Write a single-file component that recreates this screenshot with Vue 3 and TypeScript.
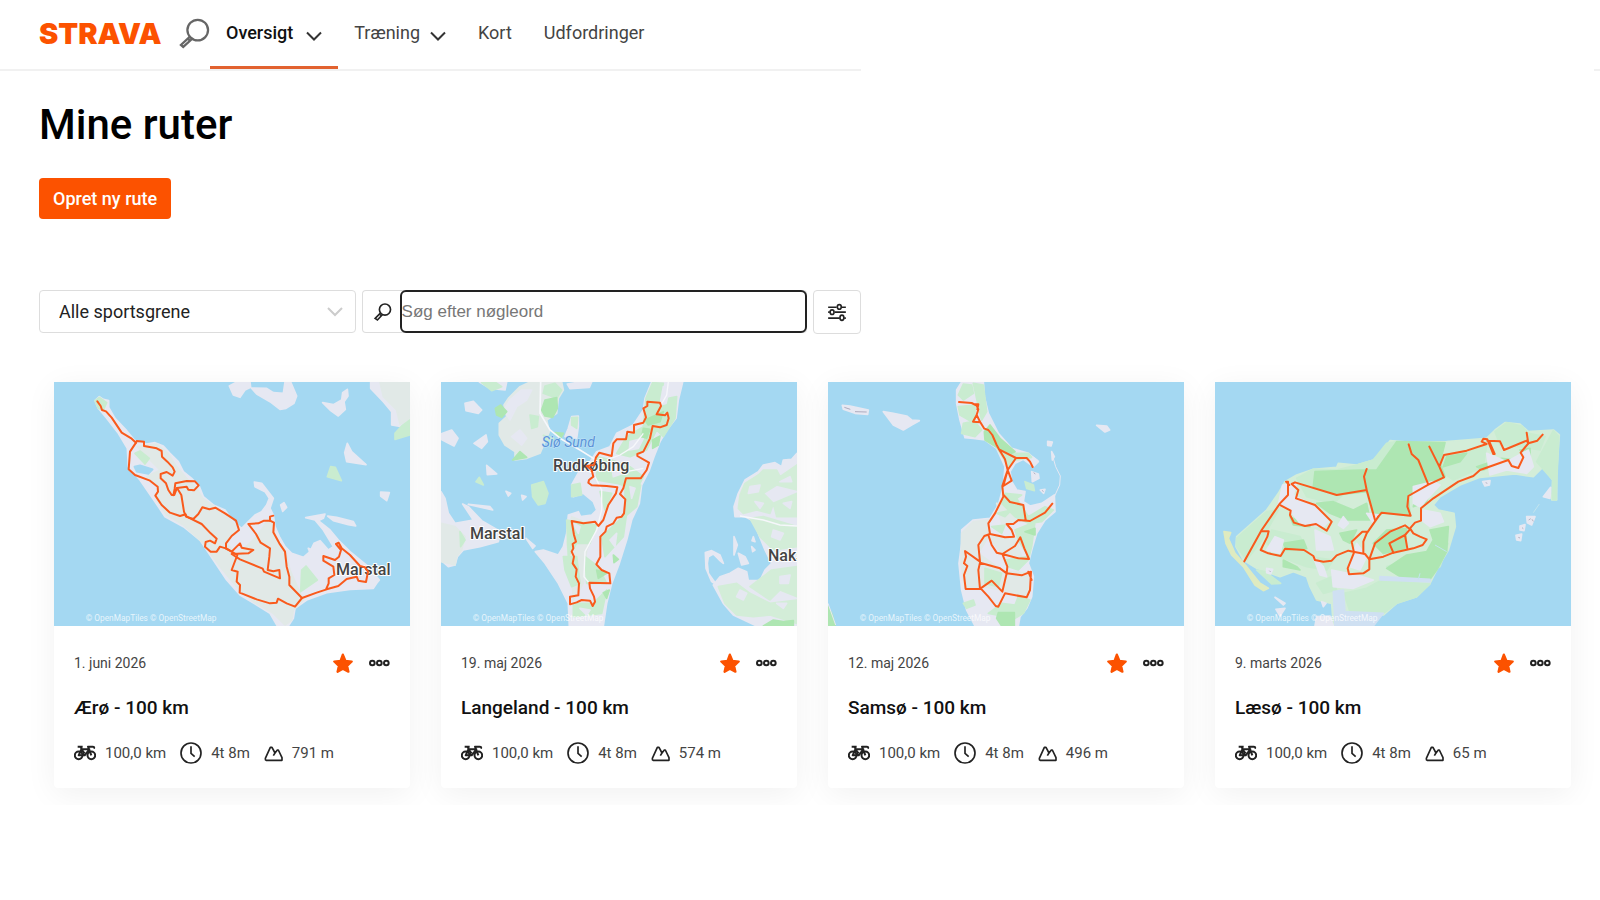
<script setup lang="ts">
import { ref } from 'vue'

interface Shape { d: string; fill: string }
interface Line { d: string; color: string; width: number }
interface Label { text: string; x: number; y: number; kind: 'town' | 'water' }
interface Route {
  date: string
  name: string
  distance: string
  time: string
  climb: string
  viewBox: string
  creditX: number
  shapes: Shape[]
  roads: Line[]
  labels: Label[]
  tracks: string[]
}

const LAND = '#e6e8f2'
const FIELD = '#e1e9e7'
const MEADOW = '#d3edd8'
const PALE = '#c9ecd0'
const GREEN = '#aee6b2'
const SEA = '#a4d8f2'

const search = ref('')
const sport = ref('all')

const routes: Route[] = [
  {
    date: '1. juni 2026', name: 'Ærø - 100 km', distance: '100,0 km', time: '4t 8m', climb: '791 m',
    viewBox: '42 36 1068 732', creditX: 137,
    shapes: [
      { fill: LAND, d: 'M165 92L178 80 190 88 206 92 206 112 225 145 260 182 285 212 320 222 345 218 370 228 390 250 415 275 430 305 455 325 478 350 490 380 520 405 555 420 580 455 605 475 625 455 645 435 665 425 680 405 688 385 675 365 645 350 643 336 665 340 700 385 690 415 700 435 705 470 718 500 735 530 755 550 790 562 810 545 822 520 840 512 865 540 880 530 850 480 825 450 797 443 855 432 850 445 835 452 870 480 895 510 930 545 985 590 1018 630 1010 640 1000 655 930 658 860 668 800 690 765 715 760 745 745 768 712 768 690 730 650 705 600 675 560 630 520 570 480 510 430 470 375 440 345 395 300 330 265 290 262 235 235 190 200 145 175 115Z' },
      { fill: FIELD, d: 'M292 230L350 222 385 252 410 290 440 325 470 355 488 385 545 425 590 470 560 520 590 555 650 500 690 440 705 500 735 540 750 600 790 690 760 720 755 750 735 765 700 730 640 695 590 650 540 590 490 520 430 465 380 435 350 390 355 350 320 320 360 300 330 270Z' },
      { fill: PALE, d: 'M165 92L178 82 200 98 190 120 175 115ZM285 250L300 243 328 265 315 282ZM785 600L798 588 832 630 782 665Z' },
      { fill: SEA, d: 'M283 290L300 286 338 298 325 312 290 305Z' },
      { fill: LAND, d: 'M568 48L590 36 630 36 632 52 615 60 600 82 580 75ZM634 54L680 55 700 68 730 70 735 36 752 36 770 78 762 100 738 115 720 118 690 95 650 72ZM848 98L880 104 905 90 908 68 922 58 924 78 912 95 916 118 895 138 870 120ZM992 36H1110V150L1085 170 1055 165 1055 125 1030 95 992 55ZM922 220L935 245 978 284 920 275 914 248ZM1022 366L1048 368 1040 392 1022 378ZM722 405L732 398 740 412 728 424ZM863 438L890 442 940 455 947 468 925 464 880 452ZM805 535L818 540 810 548Z' },
      { fill: FIELD, d: 'M1020 36H1110V148L1080 162 1070 120 1030 80Z' },
      { fill: PALE, d: 'M1110 150V195L1065 208 1065 190 1085 168ZM872 290L886 292 904 332 862 320Z' },
    ],
    roads: [],
    labels: [{ text: 'Marstal', x: 888, y: 614, kind: 'town' }],
    tracks: [
      'M172 94L182 108 186 120 198 124 215 143 245 188 275 206 288 218 270 245 266 298 285 315 330 332 353 350 354 365 346 377 365 405 390 428 420 438 437 433 440 440 485 462 512 490 530 506 525 520 510 512 497 516 495 530 512 545 530 545 540 530 560 536 592 555 575 600 593 605 590 635 600 645 599 668 650 688 690 700 710 698 714 686 740 700 765 710 786 684 830 668 860 658 895 648 920 627 950 620 955 632 978 636 984 605 975 592 960 588 930 555 905 535 896 518 888 522 903 540 897 560 885 570 850 558 850 572 880 590 883 615 866 625 866 640 858 658',
      'M288 218L290 213 312 215 312 228 350 235 365 243 366 260 382 275 398 292 404 305 398 317 380 306 362 312 362 325 378 340 385 360 395 375 403 375 411 354 440 350 445 359 462 361 476 346 465 334 440 333 406 340 404 356 400 376',
      'M411 354L424 375 432 425 438 440 460 447 475 432 487 412 508 418 526 413 555 430 588 452 597 480 575 498 558 520 558 536 575 545 590 530 600 520 605 533 640 540 625 550 575 552 600 568 668 596 672 605 720 625 718 600 700 604 683 600 688 560 690 535 662 518 648 492 625 462 655 460 672 452 690 452 702 458 700 487 718 520 735 545 740 590 748 620 748 645 786 684',
      'M690 452L690 440 700 437',
    ],
  },
  {
    date: '19. maj 2026', name: 'Langeland - 100 km', distance: '100,0 km', time: '4t 8m', climb: '574 m',
    viewBox: '33 36 1068 732', creditX: 128,
    shapes: [
      { fill: FIELD, d: 'M270 50L300 36 395 36 400 60 385 85 380 130 350 150 358 185 345 215 330 250 290 265 255 270 255 245 225 225 208 195 208 160 230 140 222 105 235 85Z' },
      { fill: LAND, d: 'M240 90L275 60 305 60 290 90 260 110 240 150 222 120ZM245 200L270 180 290 205 275 225ZM148 36H230L225 60 180 55ZM412 42L450 36H485L478 52 420 56ZM105 100L130 94 155 120 145 130 108 122ZM33 192L65 180 84 205 72 228 33 208ZM132 220L168 195 172 215 155 235ZM170 286L200 312 172 314ZM228 364L242 370 235 378ZM275 376L288 380 278 390ZM98 402L115 410 155 452 212 485 205 515 150 530 100 540 82 560 75 585 55 590 33 570V365L45 385 55 430 75 460 130 450ZM115 403L180 410 188 420ZM288 505L315 528 308 535ZM425 140L445 138 445 170 440 205 405 200 415 175Z' },
      { fill: LAND, d: 'M645 85L665 36H758L745 90 738 145 712 178 690 215 672 260 658 300 635 345 628 400 605 450 590 510 568 580 545 640 530 700 520 768H418L415 700 385 640 345 580 316 545 340 540 385 555 400 530 410 490 415 435 445 425 452 440 485 435 500 420 490 395 460 370 430 380 425 345 450 300 470 290 500 245 540 230 560 190 610 165 640 120Z' },
      { fill: FIELD, d: 'M33 460L75 470 105 500 95 540 80 560 75 585 33 575ZM425 440L500 470 470 540 460 640 430 690 425 600 410 520Z' },
      { fill: PALE, d: 'M648 85L668 38 700 40 690 90 740 80 735 145 700 200 680 180 650 240 600 260 560 250 590 200 640 170ZM500 260L545 270 600 290 640 320 620 360 560 340 500 330ZM425 345L450 340 455 375 425 380ZM510 365L545 370 525 420ZM410 450L500 465 480 520 440 520 415 560ZM585 340L632 345 620 410 585 440ZM515 500L590 430 580 500 525 560ZM400 560L440 560 450 640 425 650 405 600ZM465 560L505 590 530 640 470 640ZM430 700L490 700 530 660 515 730 430 740ZM345 48L375 40 395 60 380 85 340 70ZM155 38L195 36 215 50 185 62ZM300 135L325 140 322 170 305 175ZM305 345L340 335 354 370 345 400 325 405 308 380ZM138 335L148 322 160 345ZM90 485L105 510 92 530ZM340 196L370 205 360 225ZM425 143L443 142 440 175 425 165Z' },
      { fill: LAND, d: 'M600 215L640 205 625 235 598 240ZM700 50L718 60 708 100 690 105ZM545 290L575 285 580 310 550 320ZM430 460L450 470 445 490ZM600 350L615 355 605 385ZM540 510L560 490 555 530ZM450 715L480 720 470 735Z' },
      { fill: GREEN, d: 'M335 120L345 90 380 83 382 115 368 142 345 138ZM196 115L212 105 230 125 215 142 200 135ZM248 270L270 245 290 262ZM645 150L700 125 690 155 655 165ZM640 175L660 178 650 205 635 200ZM668 210L690 198 685 225 668 235ZM375 188L400 190 392 205ZM550 555L565 568 552 578ZM500 600L530 610 505 625ZM520 668L538 660 530 685Z' },
      { fill: LAND, d: 'M1101 250L1085 268 1060 270 1055 290 1035 278 1000 285 985 305 945 330 925 370 912 410 915 440 945 440 975 455 985 490 1005 540 1025 580 1005 600 990 632 955 632 950 605 925 595 900 610 870 620 850 645 880 700 910 735 980 768H1101ZM826 548L845 542 870 555 880 580 868 570 850 552 835 560 832 580 835 610 860 645 845 635 828 595ZM912 500L922 525 912 555ZM970 500L975 515 966 512ZM965 530L975 540 968 545ZM925 550L945 560 955 580 935 585Z' },
      { fill: MEADOW, d: 'M945 340L985 315 1000 300 1040 300 1050 320 1101 285V360L1040 345 1000 370 1030 400 1020 430 980 420 940 430 925 415 930 375ZM1030 400L1101 370V440L1040 440ZM960 445L1000 440 1101 470V530L1030 540 990 500ZM1025 600L1101 590V680L1050 660 1020 690 960 650ZM865 650L920 640 960 670 1020 700 1101 690V760L1020 735 970 740 920 735 885 700Z' },
      { fill: LAND, d: 'M960 350L990 345 985 365 955 370ZM1050 335L1080 320 1085 335ZM975 395L1000 400 990 415ZM1060 400L1085 395 1080 415ZM1030 480L1060 490 1050 510 1025 500ZM1050 620L1080 615 1075 640 1050 640ZM930 660L950 670 940 690 920 680ZM1040 700L1070 700 1060 715Z' },
      { fill: GREEN, d: 'M1030 750L1060 755 1090 752 1090 768H1000Z' },
    ],
    roads: [
      { color: '#f6f7fb', width: 5, d: 'M332 36L330 130 360 180 395 208 450 240 495 268' },
      { color: '#f6f7fb', width: 4, d: 'M715 36L710 75 690 110M640 190L610 230 570 255 530 270M495 320L515 360 515 420 500 480 465 545 462 620 478 640M930 438L1000 450 1050 465 1101 468M590 305L640 295' },
    ],
    labels: [
      { text: 'Siø Sund', x: 335, y: 230, kind: 'water' },
      { text: 'Rudkøbing', x: 369, y: 304, kind: 'town' },
      { text: 'Marstal', x: 120, y: 507, kind: 'town' },
      { text: 'Naks', x: 1014, y: 572, kind: 'town' },
    ],
    tracks: [
      'M652 95L690 98 693 108 680 133 705 136 712 128 716 145 710 165 690 172 668 168 660 205 640 245 622 252 622 258 657 278 650 300 632 325 588 325 580 355 570 372 586 388 582 430 575 440 560 443 550 460 530 470 526 485 511 500 511 560 499 583 515 600 538 610 541 640 478 638 480 655 492 680 495 695 488 708 480 692 455 690 440 697 420 703 420 680 445 676 447 640 437 620 440 598 428 580 432 560 425 545 430 535 428 522 438 515 432 495 425 453 460 460 495 455 505 468 520 450 535 405 558 370 562 352 530 348 485 346 475 338 477 330 490 320 485 300 470 288 492 285 498 262 508 248 545 258 550 220 560 208 588 208 592 185 612 188 612 165 640 158 648 142 640 115 652 108Z',
    ],
  },
  {
    date: '12. maj 2026', name: 'Samsø - 100 km', distance: '100,0 km', time: '4t 8m', climb: '496 m',
    viewBox: '39 36 1068 732', creditX: 134,
    shapes: [
      { fill: LAND, d: 'M440 36H505L508 80 520 130 550 190 590 235 640 250 670 275 655 290 625 268 600 280 585 305 590 335 605 360 630 365 625 395 645 408 680 400 718 375 720 425 690 450 665 490 650 540 640 580 655 620 650 680 635 715 615 740 610 768H480L455 720 440 660 432 580 440 520 440 480 475 450 525 445 550 405 565 350 570 290 545 235 510 210 475 205 450 203 435 150 425 100 425 60Z' },
      { fill: FIELD, d: 'M440 490L475 455 520 450 520 500 490 550 560 600 640 610 640 680 560 660 500 650 450 655 438 580ZM545 400L625 410 620 450 560 460ZM520 500L600 500 620 560 560 550Z' },
      { fill: PALE, d: 'M430 75L445 42 470 45 475 70 445 90ZM475 40L505 45 515 125 500 150 488 100ZM430 110L480 105 480 155 500 180 480 200 440 190 445 160 470 155 435 135ZM545 232L590 250 640 250 650 262 600 270 580 290ZM570 370L620 375 605 385 640 440 690 410 715 420 680 455 640 460 600 440 560 400ZM545 430L590 420 570 440ZM600 480L660 455 650 530 640 570 610 600 580 590 570 570 640 560 610 510ZM530 470L570 465 560 490ZM510 595L560 610 550 650 510 640ZM445 700L475 690 480 705 455 715ZM520 730L560 700 600 705 610 680 645 690 625 730 600 745ZM630 335L655 345 658 362 635 355Z' },
      { fill: GREEN, d: 'M508 185L525 165 555 205 600 245 590 250 550 235 510 210ZM550 728H598V768H560L545 745ZM630 485L660 475 660 495ZM39 710L52 735 60 768H39Z' },
      { fill: LAND, d: 'M205 125L235 130 275 138 290 150 313 152 290 165 265 180 235 165ZM845 166L875 168 884 180 870 186ZM698 214L712 216 708 228 698 226ZM710 245L718 260 712 270ZM650 305L670 312 672 325 652 335ZM655 262L668 272 660 276ZM676 360L690 358 686 370ZM82 106L105 108 160 120 158 133 120 130 85 118Z' },
    ],
    roads: [
      { color: '#8f8ba3', width: 2, d: 'M88 112L106 118M120 125L155 126M682 361L685 365M656 308L661 312' },
      { color: LAND, width: 3, d: 'M713 258L722 290 736 318 734 345 718 380M39 700L62 765' },
    ],
    labels: [],
    tracks: [
      'M432 96L470 99 485 107 490 118 485 135 474 155 496 157 485 135M480 103L490 103 487 118M496 157L508 176 520 180 532 195 545 225 552 238 570 268 578 300 590 332 565 348 578 300M552 238L603 264 578 300 562 348 565 380 540 430 520 460 525 492 550 497 570 502 597 500 590 480 575 462 595 462 610 450 645 453 690 428 712 401M603 264L635 264 645 275 653 291M565 374L585 396 625 405 632 450',
      'M525 492L508 498 490 525 495 575 450 543 453 560 447 580 457 588 447 615 452 657 495 657 490 600 495 578 555 595 575 610 620 616 648 605 645 660 635 682 570 670 550 710 542 708 520 680 497 655 530 632 562 665 575 610 577 590 562 552 545 548 530 525 520 495M562 552L600 528 616 502 628 535 642 567 610 565 562 552M640 605L650 630',
    ],
  },
  {
    date: '9. marts 2026', name: 'Læsø - 100 km', distance: '100,0 km', time: '4t 8m', climb: '65 m',
    viewBox: '45 36 1068 732', creditX: 140,
    shapes: [
      { fill: MEADOW, d: 'M110 500L150 465 200 420 235 370 255 335 290 315 340 298 410 292 415 280 470 285 520 270 550 240 570 212 640 218 740 215 860 205 885 180 915 158 960 162 985 185 1060 180 1078 195 1070 310 1070 390 1055 390 1058 330 1030 290 1000 320 945 312 840 322 780 345 720 380 700 405 715 420 762 430 766 470 745 540 715 590 690 640 650 680 590 700 550 735 430 740 400 768 395 700 350 690 330 650 320 620 280 605 240 620 170 595 130 570 108 530Z' },
      { fill: PALE, d: 'M110 505L200 425 235 420 180 520 140 570 110 530ZM290 325L340 298 410 300 470 285 520 270 560 220 590 215 560 300 480 330 400 400 320 380ZM885 185L920 158 965 168 985 190 1035 200 1020 240 960 230 900 225ZM1010 275L1060 182 1076 200 1068 390 1058 388 1058 330ZM350 640L395 620 410 660 370 670ZM432 670L500 655 545 630 690 642 650 680 590 700 550 730 450 725ZM170 600L195 605 242 640 215 642ZM725 260L860 225 850 290 760 330 720 300ZM215 480L300 500 330 560 400 570 380 600 320 590 240 560 200 520ZM560 590L700 545 745 520 720 590 640 620Z' },
      { fill: GREEN, d: 'M530 300L590 215 735 218 720 280 735 320 625 378 630 438 545 428 525 455 500 365 410 375 340 350 345 305 480 300ZM350 400L400 395 460 420 500 400 510 450 440 450 390 430ZM420 490L470 480 450 520 430 510ZM250 520L310 510 320 535 260 540ZM520 520L560 480 620 475 615 535 550 550ZM560 595L620 555 680 545 700 510 690 480 745 470 740 545 710 600 690 628 600 620ZM740 260L800 250 780 275 730 290ZM960 240L990 235 990 260ZM250 570L290 590 300 600 250 590ZM830 290L905 265 930 268 850 300ZM650 370L690 360 680 395 640 410ZM270 440L330 470 280 465Z' },
      { fill: LAND, d: 'M248 345L290 340 280 375 320 395 350 415 385 455 370 470 300 460 270 420 235 405ZM345 480L390 500 400 540 350 540ZM500 430L540 435 520 460ZM670 420L720 430 730 455 690 470 665 450ZM860 250L920 275 985 240 1000 290 980 310 920 300 870 315ZM340 560L370 590 380 620 360 615ZM470 520L500 560 480 600 450 590ZM225 500L250 510 240 550 200 540ZM395 600L470 615 520 630 460 655 400 650ZM640 350L700 335 720 345 660 410 640 400ZM430 440L445 460 430 475 415 465Z' },
      { fill: '#cfe0f2', d: 'M400 665L430 660 435 725 550 730 520 768H405ZM540 620L690 628 690 636 540 630Z' },
      { fill: '#dfebc0', d: 'M72 485L92 488 85 505 105 550 140 590 180 640 205 655 190 662 165 645 130 590 95 555 78 520Z' },
      { fill: LAND, d: 'M848 335L870 332 868 345 855 348ZM1030 380L1052 352 1050 385ZM980 440L1005 440 995 465 982 458ZM960 468L975 464 972 482 960 480ZM948 496L965 492 962 512 950 510ZM225 682L255 700 250 705ZM228 718L255 715 240 738ZM365 695L378 700 370 710ZM350 740L390 738 400 768H345ZM200 595L218 598 212 612 200 608Z' },
    ],
    roads: [
      { color: '#9a97a8', width: 2, d: 'M986 450L992 446M996 448L1000 454M966 473L970 476M955 502L960 504M857 338L862 340M208 602L212 606' },
      { color: '#c3e5ee', width: 3, d: 'M1000 428L1018 402M705 525L740 545M660 610L655 628' },
    ],
    labels: [],
    tracks: [
      'M133 574L185 480 240 400 264 375 264 335 258 335 268 345',
      'M185 484L206 484 202 500 182 540 205 550 242 558 255 536 312 540 340 558 345 570 370 575 395 572 410 556 445 542 495 552 508 568 550 560 580 548 640 535 668 525 680 508 660 500 640 490 630 475 645 458 663 452 663 415 700 385 775 335 820 318 840 300 925 270 935 288 955 294 970 262 962 248 985 220 1012 212 1028 194',
      'M242 406L272 422 270 435 282 458 315 468 348 462 380 482 395 455 345 405 288 385 295 360 275 342 285 337 410 375 500 360 M500 297L492 320 500 360 525 450M535 440L545 428 632 437 622 410 625 378 685 344 732 322 718 290 688 230M626 223L635 252 655 270 685 344M718 290L732 255 800 242 860 222 845 215 850 206 862 208 880 252 M868 215L884 252M862 212L900 214 912 240 980 212 985 220 980 188',
      'M535 440L500 490 490 515 490 550M500 485L487 485 455 515 462 548 443 595 447 613 490 610 508 598 508 568 525 520 570 485 615 466 630 478 615 495 622 535M615 495L568 520 580 548',
    ],
  },
]
</script>

<template>
  <div class="page">
    <header class="topbar">
      <nav class="nav" aria-label="Hovedmenu">
        <a class="logo" href="#">STRAVA</a>
        <button class="icon-button find" type="button" aria-label="Søg">
          <svg viewBox="538 50 96 96" width="32" height="32" fill="none" stroke="#666" stroke-width="7">
            <circle cx="596" cy="89" r="32" />
            <path d="M572 109L544 135 551 141 580 115M564 114L573 123" />
          </svg>
        </button>
        <a class="nav-item active" href="#">
          Oversigt
          <svg class="chevron" viewBox="0 0 16 10" width="16" height="10"><path d="M1 1.500L8 8.500 15 1.500" /></svg>
        </a>
        <a class="nav-item" href="#">
          Træning
          <svg class="chevron" viewBox="0 0 16 10" width="16" height="10"><path d="M1 1.500L8 8.500 15 1.500" /></svg>
        </a>
        <a class="nav-item" href="#">Kort</a>
        <a class="nav-item" href="#">Udfordringer</a>
      </nav>
    </header>

    <main>
      <section class="intro">
        <h1>Mine ruter</h1>
        <button class="primary" type="button">Opret ny rute</button>
        <form class="filters" @submit.prevent>
          <div class="select-box">
            <select v-model="sport" aria-label="Sportsgren">
              <option value="all">Alle sportsgrene</option>
              <option value="ride">Cykling</option>
              <option value="run">Løb</option>
            </select>
            <svg class="select-arrow" viewBox="0 0 16 10" width="16" height="10"><path d="M1 1L8 8 15 1" /></svg>
          </div>
          <label class="search-box">
            <svg viewBox="1058 90 60 64" width="20" height="21" fill="none" stroke="#222" stroke-width="5">
              <circle cx="1094" cy="116" r="17" />
              <path d="M1080 127L1064 143 1071 148 1086 132M1076 128L1084 136" />
            </svg>
            <input v-model="search" type="text" placeholder="Søg efter nøgleord" aria-label="Søg efter nøgleord" />
          </label>
          <button class="filter-button" type="button" aria-label="Filtre">
            <svg viewBox="1158 96 60 58" width="20" height="19" fill="none" stroke="#222" stroke-width="5">
              <path d="M1161 109H1187M1203 109H1215M1161 124H1166M1181 124H1215M1161 142H1196M1210 142H1215" />
              <ellipse cx="1195" cy="108" rx="6" ry="7" />
              <ellipse cx="1173" cy="124" rx="6" ry="7" />
              <ellipse cx="1203" cy="141" rx="6" ry="8" />
            </svg>
          </button>
        </form>
      </section>

      <section class="cards" aria-label="Ruter">
        <article v-for="route in routes" :key="route.name" class="card">
          <svg class="map" :viewBox="route.viewBox" role="img" :aria-label="route.name">
            <path v-for="(shape, i) in route.shapes" :key="'s' + i" class="area" :d="shape.d" :fill="shape.fill" :stroke="shape.fill" />
            <path v-for="(road, i) in route.roads" :key="'r' + i" :d="road.d" fill="none" :stroke="road.color" :stroke-width="road.width" />
            <text class="credit" :x="route.creditX" y="752">© OpenMapTiles © OpenStreetMap</text>
            <text v-for="label in route.labels" :key="label.text" :class="label.kind" :x="label.x" :y="label.y">{{ label.text }}</text>
            <path v-for="(track, i) in route.tracks" :key="'t' + i" class="track" :d="track" />
          </svg>
          <div class="body">
            <div class="meta">
              <time>{{ route.date }}</time>
              <button class="icon-button" type="button" aria-label="Favorit">
                <svg viewBox="881 98 61 61" width="20" height="20">
                  <path d="M911 103L919 122 938 124 924 137 928 155 911 146 895 155 899 137 885 124 904 122Z" fill="#fc5200" stroke="#fc5200" stroke-width="7" stroke-linejoin="round" />
                </svg>
              </button>
              <button class="icon-button" type="button" aria-label="Flere muligheder">
                <svg viewBox="989 119 63 24" width="21" height="8" fill="none" stroke="#222" stroke-width="6">
                  <circle cx="999" cy="131" r="7" /><circle cx="1020" cy="131" r="7" /><circle cx="1041" cy="131" r="7" />
                </svg>
              </button>
            </div>
            <h2>{{ route.name }}</h2>
            <div class="stats">
              <span class="stat">
                <svg viewBox="101 374 66 48" width="22" height="16" fill="none" stroke="#222" stroke-width="6" stroke-linejoin="round">
                  <circle cx="115" cy="405" r="11.500" /><circle cx="153" cy="405" r="11.500" />
                  <path d="M115 405L123 387H147L133 405ZM121 380L133 405M112 379H127M153 405L143 379H157Q163 379 161 385M123 387L133 399" />
                </svg>
                {{ route.distance }}
              </span>
              <span class="stat">
                <svg viewBox="418 363 66 66" width="22" height="22" fill="none" stroke="#222" stroke-width="5">
                  <circle cx="451" cy="396" r="30" /><path d="M451 376V397L462 407" />
                </svg>
                {{ route.time }}
              </span>
              <span class="stat">
                <svg viewBox="666 371 57 51" width="19" height="17" fill="none" stroke="#222" stroke-width="5" stroke-linejoin="round">
                  <path d="M670 411L685 378H690L699 395 706 386H709L720 409V417H673Q669 416 670 411ZM699 395L694 403" />
                </svg>
                {{ route.climb }}
              </span>
            </div>
          </div>
        </article>
      </section>
    </main>
  </div>
</template>

<style>
body {
  margin: 0;
  background: #fff;
}
</style>

<style scoped>
.page {
  font-family: Roboto, "Liberation Sans", sans-serif;
  color: #222;
}
.topbar {
  display: flex;
  justify-content: space-between;
}
.topbar::after {
  content: "";
  width: 6px;
  border-bottom: 2px solid #f1f1f1;
}
.nav {
  display: flex;
  flex: 0 1 861px;
  box-sizing: border-box;
  height: 71px;
  padding-left: 39px;
  border-bottom: 2px solid #f1f1f1;
}
.logo {
  width: 140px;
  font: 900 29px/68px Inter, sans-serif;
  color: #fc5200;
  text-decoration: none;
}
.icon-button {
  display: flex;
  align-items: center;
  padding: 0;
  border: 0;
  background: none;
}
.find {
  width: 31px;
  height: 65px;
}
.nav-item {
  display: flex;
  align-items: center;
  gap: 10px;
  box-sizing: border-box;
  height: 69px;
  padding: 0 16px 4px;
  font-size: 18px;
  color: #444;
  text-decoration: none;
}
.nav-item.active {
  gap: 13px;
  padding-bottom: 1px;
  border-bottom: 3px solid #e2622f;
  font-weight: 500;
  color: #111;
}
.chevron {
  margin-top: 6px;
  fill: none;
  stroke: #333;
  stroke-width: 2;
}
.intro {
  max-width: 822px;
  padding: 29px 39px 0;
}
h1 {
  margin: 0 0 28px;
  font-size: 42px;
  font-weight: 500;
  line-height: 50px;
  color: #000;
}
.primary {
  height: 41px;
  padding: 0 14px;
  border: 0;
  border-radius: 4px;
  background: #fc5200;
  font: 500 18px Roboto, sans-serif;
  color: #fff;
}
.filters {
  display: flex;
  gap: 6px;
  height: 43px;
  margin-top: 71px;
}
.select-box {
  position: relative;
  flex: 317;
}
select {
  width: 100%;
  height: 43px;
  padding: 0 19px;
  border: 1px solid #ddd;
  border-radius: 4px;
  appearance: none;
  background: #fff;
  font: 18px Roboto, sans-serif;
  color: #222;
}
.select-arrow {
  position: absolute;
  right: 13px;
  top: 17px;
  fill: none;
  stroke: #ccc;
  stroke-width: 2;
  pointer-events: none;
}
.search-box {
  display: flex;
  flex: 446;
  align-items: center;
  box-sizing: border-box;
  height: 43px;
  border-radius: 4px;
  box-shadow: inset 0 0 0 1px #ddd;
}
.search-box svg {
  flex: none;
  margin: 0 7px 0 11px;
}
input {
  flex: 1;
  box-sizing: border-box;
  min-width: 0;
  height: 43px;
  padding: 0;
  border: 2px solid #222;
  border-radius: 6px;
  outline: 0;
  background: #fff;
  font: 17px "Liberation Sans", sans-serif;
}
input::placeholder {
  color: #777;
}
.filter-button {
  display: flex;
  flex: none;
  align-items: center;
  justify-content: center;
  width: 48px;
  height: 44px;
  padding: 0;
  border: 1px solid #ddd;
  border-radius: 4px;
  background: #fff;
}
.cards {
  display: grid;
  grid-template-columns: repeat(4, 1fr);
  gap: 31px;
  margin-top: 25px;
  padding: 24px 29px 17px 54px;
  overflow: hidden;
}
.card {
  border-radius: 4px;
  background: #fff;
  box-shadow: 0 6px 32px rgba(0, 0, 0, 0.06);
}
.map {
  display: block;
  width: 100%;
  aspect-ratio: 356 / 244;
  background: #a4d8f2;
}
.area {
  stroke-width: 5;
  stroke-linejoin: round;
}
.track {
  fill: none;
  stroke: #f95a1c;
  stroke-width: 6;
  stroke-linecap: round;
  stroke-linejoin: round;
}
.town {
  font-size: 48px;
  font-weight: 500;
  fill: #444;
  stroke: #fff;
  stroke-width: 6;
  stroke-linejoin: round;
  paint-order: stroke;
}
.water {
  font-size: 42px;
  font-style: italic;
  fill: #5b93d8;
  stroke: #c5e4f6;
  stroke-width: 3;
  paint-order: stroke;
}
.credit {
  font-size: 25px;
  fill: #fff;
  fill-opacity: 0.75;
}
.body {
  display: grid;
  gap: 21px;
  padding: 25px 20px 23px;
}
.meta {
  display: flex;
  gap: 16px;
  height: 24px;
}
time {
  flex: 1;
  font-size: 14px;
  line-height: 24px;
  color: #444;
}
h2 {
  margin: 0;
  font-size: 19px;
  font-weight: 500;
  line-height: 24px;
  color: #111;
}
.stats {
  display: flex;
  gap: 14px;
}
.stat {
  display: flex;
  align-items: center;
  gap: 9px;
  font-size: 15px;
  line-height: 24px;
  color: #444;
}
</style>
